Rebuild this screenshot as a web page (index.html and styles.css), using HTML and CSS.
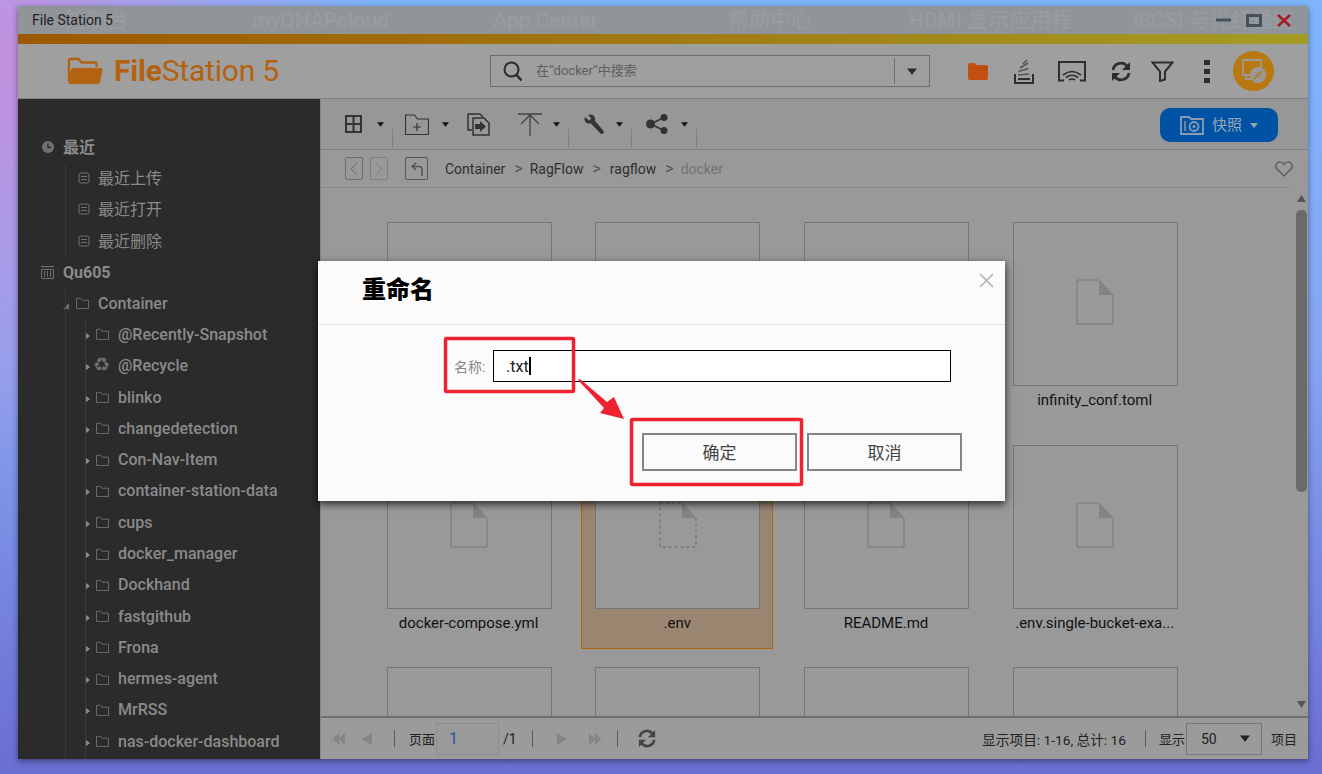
FILE: index.html
```html
<!DOCTYPE html>
<html lang="zh">
<head>
    <meta charset="UTF-8">
    <meta name="viewport" content="width=device-width, initial-scale=1.0">
    <title>File Station 5</title>
    <link rel="stylesheet" href="styles.css">
</head>
<body>

<svg class="defs" width="0" height="0">
    <symbol id="i-folder" viewBox="0 0 14 13"><path d="M.5 12.5V1.5h4.5l1.5 2h7v9z" fill="none" stroke="currentColor"/></symbol>
    <symbol id="i-list" viewBox="0 0 12 12"><rect x="1" y="1" width="10" height="10" rx="2" fill="none" stroke="currentColor"/><path d="M3 4.5h6M3 7.5h6" stroke="currentColor"/></symbol>
    <symbol id="i-caret" viewBox="0 0 8 5"><path d="M0 0h8L4 5z" fill="currentColor"/></symbol>
    <symbol id="i-file" viewBox="0 0 38 46"><path d="M1 1h22l14 15v29H1z" fill="none" stroke="#757b80"/><path d="M23 1l14 15H23z" fill="#80858a"/></symbol>
</svg>

<div class="window">
    <div class="titlebar">
        <div class="desktop-labels">
            <span class="label-console">控制台</span>
            <span class="label-cloud">myQNAPcloud</span>
            <span class="label-app">App Center</span>
            <span class="label-help">帮助中心</span>
            <span class="label-hdmi">HDMI 显示应用程</span>
            <span class="label-iscsi">iSCSI 与光纤通道</span>
        </div>
        <span class="title-text">File Station 5</span>
        <div class="win-controls">
            <svg width="15" height="12" viewBox="0 0 15 12"><path d="M0 6h15" stroke="#465058" stroke-width="3"/></svg>
            <svg width="16" height="13" viewBox="0 0 16 13"><rect x="1.500" y="1.500" width="13" height="10" fill="none" stroke="#465058" stroke-width="3"/></svg>
            <svg width="14" height="13" viewBox="0 0 14 13"><path d="M1 1l12 11M13 1L1 12" stroke="#a81c24" stroke-width="2.600"/></svg>
        </div>
    </div>
    <div class="strip"></div>

    <div class="header">
        <div class="logo">
            <svg width="36" height="28" viewBox="0 0 36 28"><path d="M2 24V3.500Q2 2 3.500 2h8l3 3.500h13q2 0 2 2V10" fill="none" stroke="#b3620f" stroke-width="2.400"/><path d="M6 11h28q2 0 1.600 2L33 25q-.4 2-2 2H3q-2 0-1.500-2L4 13q.4-2 2-2z" fill="#b3620f"/></svg>
            <span class="logo-text"><b>File</b>Station 5</span>
        </div>
        <div class="search">
            <svg width="20" height="21" viewBox="0 0 20 21"><circle cx="8.500" cy="8.500" r="7" fill="none" stroke="#2b2b2b" stroke-width="2"/><path d="M13.500 14l5 5.500" stroke="#2b2b2b" stroke-width="2.600"/></svg>
            <span class="search-hint">在“docker”中搜索</span>
            <span class="search-drop"><svg width="10" height="7"><use href="#i-caret"/></svg></span>
        </div>
        <div class="head-icons">
            <svg class="hi-folder" width="22" height="19" viewBox="0 0 22 19"><path d="M1 3q0-2 2-2h5l2 2h9q2 0 2 2v11q0 2-2 2H3q-2 0-2-2z" fill="#c4500f"/><path d="M3 6h18" stroke="#a8480f"/></svg>
            <svg class="hi-stack" width="20" height="25" viewBox="0 0 20 25"><path d="M1 15v9h18v-9M4 20h12" fill="none" stroke="#2e2e2e" stroke-width="2"/><path d="M4 16l11-1M4.500 12.500l10-3M6 9l8-5M9 5l4-4" stroke="#555" stroke-width="1.500"/></svg>
            <svg class="hi-cast" width="28" height="21" viewBox="0 0 28 21"><path d="M6 19.500H1V1h26v18.500h-5" fill="none" stroke="#2e2e2e" stroke-width="2"/><path d="M5 14q9-7 18 0M8 16.500q6-4.500 12 0M11 19q3-2 6 0" fill="none" stroke="#2e2e2e" stroke-width="1.700"/></svg>
            <svg class="hi-refresh" width="20" height="21" viewBox="0 0 20 21"><path d="M2 9a8 8 0 0 1 14-4M18 12a8 8 0 0 1-14 4" fill="none" stroke="#2e2e2e" stroke-width="2.800"/><path d="M19 1v8h-8zM1 20v-8h8z" fill="#2e2e2e"/></svg>
            <svg class="hi-filter" width="23" height="21" viewBox="0 0 23 21"><path d="M1.500 1.500h20l-7.500 9v8l-5 1.500v-9.500z" fill="none" stroke="#2e2e2e" stroke-width="2"/></svg>
            <svg class="hi-dots" width="6" height="23" viewBox="0 0 6 23"><path d="M0 0h6v5H0zM0 9h6v5H0zM0 18h6v5H0z" fill="#2e2e2e"/></svg>
            <span class="avatar">
                <svg width="26" height="26" viewBox="0 0 26 26"><path d="M9 17H2V2h18v8M5 17v4h5" fill="none" stroke="#9a9a9a" stroke-width="1.800"/><circle cx="17" cy="17" r="8" fill="#9a9a9a"/><path d="M13 21l8-8M15 15l1 1M18 18l1 1" stroke="#b87a10" stroke-width="1.500"/></svg>
            </span>
        </div>
    </div>

    <div class="workspace">
        <nav class="sidebar">
            <div class="tree-row root"><svg class="ico" width="12" height="12" viewBox="0 0 12 12"><circle cx="6" cy="6" r="6" fill="currentColor"/><path d="M6 2.500V6.500H9" fill="none" stroke="#2b2b2b" stroke-width="1.300"/></svg><span class="cjk">最近</span></div>
            <div class="tree-row leaf"><svg class="ico" width="12" height="12"><use href="#i-list"/></svg><span class="cjk">最近上传</span></div>
            <div class="tree-row leaf"><svg class="ico" width="12" height="12"><use href="#i-list"/></svg><span class="cjk">最近打开</span></div>
            <div class="tree-row leaf"><svg class="ico" width="12" height="12"><use href="#i-list"/></svg><span class="cjk">最近删除</span></div>
            <div class="tree-row root store"><svg class="ico" width="13" height="13" viewBox="0 0 13 13"><path d="M0 .5h13" stroke="currentColor" stroke-width="1.400"/><path d="M.5 3.500h12v9H.5zM3.500 5v6M6.500 5v6M9.500 5v6" fill="none" stroke="currentColor"/></svg><span>Qu605</span></div>
            <div class="tree-row share"><i class="tri open"></i><svg class="ico" width="13" height="12"><use href="#i-folder"/></svg><span>Container</span></div>
            <div class="tree-row sub"><i class="tri"></i><svg class="ico" width="13" height="12"><use href="#i-folder"/></svg><span>@Recently-Snapshot</span></div>
            <div class="tree-row sub"><i class="tri"></i><span class="glyph">♻</span><span>@Recycle</span></div>
            <div class="tree-row sub"><i class="tri"></i><svg class="ico" width="13" height="12"><use href="#i-folder"/></svg><span>blinko</span></div>
            <div class="tree-row sub"><i class="tri"></i><svg class="ico" width="13" height="12"><use href="#i-folder"/></svg><span>changedetection</span></div>
            <div class="tree-row sub"><i class="tri"></i><svg class="ico" width="13" height="12"><use href="#i-folder"/></svg><span>Con-Nav-Item</span></div>
            <div class="tree-row sub"><i class="tri"></i><svg class="ico" width="13" height="12"><use href="#i-folder"/></svg><span>container-station-data</span></div>
            <div class="tree-row sub"><i class="tri"></i><svg class="ico" width="13" height="12"><use href="#i-folder"/></svg><span>cups</span></div>
            <div class="tree-row sub"><i class="tri"></i><svg class="ico" width="13" height="12"><use href="#i-folder"/></svg><span>docker_manager</span></div>
            <div class="tree-row sub"><i class="tri"></i><svg class="ico" width="13" height="12"><use href="#i-folder"/></svg><span>Dockhand</span></div>
            <div class="tree-row sub"><i class="tri"></i><svg class="ico" width="13" height="12"><use href="#i-folder"/></svg><span>fastgithub</span></div>
            <div class="tree-row sub"><i class="tri"></i><svg class="ico" width="13" height="12"><use href="#i-folder"/></svg><span>Frona</span></div>
            <div class="tree-row sub"><i class="tri"></i><svg class="ico" width="13" height="12"><use href="#i-folder"/></svg><span>hermes-agent</span></div>
            <div class="tree-row sub"><i class="tri"></i><svg class="ico" width="13" height="12"><use href="#i-folder"/></svg><span>MrRSS</span></div>
            <div class="tree-row sub"><i class="tri"></i><svg class="ico" width="13" height="12"><use href="#i-folder"/></svg><span>nas-docker-dashboard</span></div>
        </nav>

        <main class="main">
            <div class="toolbar">
                <div class="tool t-view">
                    <svg width="17" height="18" viewBox="0 0 17 18"><path d="M1 1h15v16H1zM8.500 1v16M1 9h15" fill="none" stroke="#333" stroke-width="2"/></svg>
                    <svg width="7" height="5"><use href="#i-caret"/></svg>
                </div>
                <i class="tool-sep"></i>
                <div class="tool t-new">
                    <svg width="24" height="21" viewBox="0 0 24 21"><path d="M.5 20.500V1h9l3 4h11v15.500zM12 9v8M8 13h8" fill="none" stroke="#333" stroke-width="1.200"/></svg>
                    <svg width="7" height="5"><use href="#i-caret"/></svg>
                </div>
                <div class="tool t-copy">
                    <svg width="23" height="23" viewBox="0 0 23 23"><path d="M5 17H1V1h12l3 3" fill="none" stroke="#333" stroke-width="1.500"/><path d="M6 5h11l5 5v12H6z" fill="none" stroke="#333" stroke-width="1.500"/><path d="M8 11h5V8l6 5.500-6 5.500v-3H8z" fill="#333"/></svg>
                </div>
                <div class="tool t-up">
                    <svg width="24" height="23" viewBox="0 0 24 23"><path d="M0 1h24M12 23V3M3 11l9-9 9 9" fill="none" stroke="#444" stroke-width="1.300"/></svg>
                    <svg width="7" height="5"><use href="#i-caret"/></svg>
                </div>
                <i class="tool-sep"></i>
                <div class="tool t-wrench">
                    <svg width="20" height="21" viewBox="0 0 20 21"><path d="M1 3l4 3.500 2.500-2L4 1q4-1.500 6 1 1.500 2 .8 4.500L19.500 17q.7 1.500-.5 2.500T16.500 19.500L7 9.500Q3 10 1.500 8T1 3z" fill="#333"/></svg>
                    <svg width="7" height="5"><use href="#i-caret"/></svg>
                </div>
                <i class="tool-sep"></i>
                <div class="tool t-share">
                    <svg width="22" height="20" viewBox="0 0 22 20"><circle cx="4.500" cy="10" r="4.500" fill="#333"/><circle cx="18" cy="3.500" r="3.500" fill="#333"/><circle cx="18" cy="16.500" r="3.500" fill="#333"/><path d="M4.500 10L18 3.500M4.500 10L18 16.500" stroke="#333" stroke-width="1.600"/></svg>
                    <svg width="7" height="5"><use href="#i-caret"/></svg>
                </div>
                <i class="tool-sep"></i>
                <button class="snapshot">
                    <svg width="24" height="20" viewBox="0 0 24 20"><path d="M1 19V2h8l2 2h12v15z" fill="none" stroke="#8a9ab0" stroke-width="1.800"/><path d="M5 6v10" stroke="#8a9ab0" stroke-width="1.500"/><circle cx="14" cy="11.500" r="4.500" fill="none" stroke="#8a9ab0" stroke-width="1.800"/><circle cx="14" cy="11.500" r="1.500" fill="#8a9ab0"/></svg>
                    <span>快照</span>
                    <svg width="8" height="5"><use href="#i-caret"/></svg>
                </button>
            </div>

            <div class="crumbs">
                <span class="nav-btn"><svg width="8" height="14" viewBox="0 0 8 14"><path d="M7 1L1 7l6 6" fill="none" stroke="#6a6a6a"/></svg></span>
                <span class="nav-btn off"><svg width="8" height="14" viewBox="0 0 8 14"><path d="M1 1l6 6-6 6" fill="none" stroke="#808080"/></svg></span>
                <span class="nav-btn up"><svg width="12" height="14" viewBox="0 0 12 14"><path d="M5 1L1 4.500 5 8M1 4.500h7q3 0 3 3V14" fill="none" stroke="#505050" stroke-width="1.400"/></svg></span>
                <span class="crumb first">Container</span><i class="arrow">&gt;</i>
                <span class="crumb">RagFlow</span><i class="arrow">&gt;</i>
                <span class="crumb third">ragflow</span><i class="arrow">&gt;</i>
                <span class="crumb last">docker</span>
                <svg class="heart" width="18" height="16" viewBox="0 0 18 16"><path d="M9 15L2 8Q0 6 1 3.500 2.500.5 5.500 1 8 1.500 9 3.500 10 1.500 12.500 1 15.500.5 17 3.500 18 6 16 8z" fill="none" stroke="#555" stroke-width="1.200"/></svg>
            </div>

            <div class="browse">
                <div class="files">
                    <div class="file"><div class="thumb"></div></div>
                    <div class="file"><div class="thumb"></div></div>
                    <div class="file"><div class="thumb"></div></div>
                    <div class="file"><div class="thumb"><svg width="38" height="46"><use href="#i-file"/></svg></div><p>infinity_conf.toml</p></div>
                    <div class="file"><div class="thumb"><svg width="38" height="46"><use href="#i-file"/></svg></div><p>docker-compose.yml</p></div>
                    <div class="file selected"><div class="thumb"><svg width="38" height="46" viewBox="0 0 38 46"><path d="M1 1h22l14 15v29H1z" fill="none" stroke="#666" stroke-dasharray="3 3"/><path d="M23 1l14 15H23z" fill="#80858a"/></svg></div><p>.env</p></div>
                    <div class="file"><div class="thumb"><svg width="38" height="46"><use href="#i-file"/></svg></div><p>README.md</p></div>
                    <div class="file"><div class="thumb"><svg width="38" height="46"><use href="#i-file"/></svg></div><p>.env.single-bucket-exa...</p></div>
                    <div class="file"><div class="thumb"></div></div>
                    <div class="file"><div class="thumb"></div></div>
                    <div class="file"><div class="thumb"></div></div>
                    <div class="file"><div class="thumb"></div></div>
                </div>
                <div class="scrollbar">
                    <svg width="9" height="7"><path d="M4.500 0L9 7H0z" fill="#555"/></svg>
                    <div class="thumb-bar"></div>
                    <svg class="scroll-down" width="9" height="7"><path d="M0 0h9L4.500 7z" fill="#555"/></svg>
                </div>
            </div>

            <div class="pager">
                <svg class="pg-first" width="14" height="12" viewBox="0 0 14 12"><path d="M1 0v12M8 0v12L2 6zM14 0v12L8 6z" fill="#858585" stroke="#858585" stroke-width=".5"/></svg>
                <svg class="pg-prev" width="12" height="12" viewBox="0 0 12 12"><path d="M12 0v12L2 6z" fill="#858585"/></svg>
                <i class="pg-sep first-sep"></i>
                <span class="pg-label">页面</span>
                <span class="pg-input">1</span>
                <span class="pg-total">/1</span>
                <i class="pg-sep total-sep"></i>
                <svg class="pg-next" width="12" height="12" viewBox="0 0 12 12"><path d="M0 0v12L10 6z" fill="#858585"/></svg>
                <svg class="pg-last" width="14" height="12" viewBox="0 0 14 12"><path d="M13 0v12M6 0v12L12 6zM0 0v12L6 6z" fill="#858585" stroke="#858585" stroke-width=".5"/></svg>
                <i class="pg-sep last-sep"></i>
                <svg class="pg-refresh" width="18" height="21" viewBox="0 0 20 21"><path d="M2 9a8 8 0 0 1 14-4M18 12a8 8 0 0 1-14 4" fill="none" stroke="#444" stroke-width="3"/><path d="M19 1v8h-8zM1 20v-8h8z" fill="#444"/></svg>
                <span class="pg-info">显示项目: 1-16, 总计: 16</span>
                <i class="pg-sep info-sep"></i>
                <span class="pg-label">显示</span>
                <span class="pg-select">50<svg width="10" height="7"><use href="#i-caret"/></svg></span>
                <span class="pg-unit">项目</span>
            </div>
        </main>
    </div>
</div>

<div class="dialog">
    <div class="dialog-head">
        <h2>重命名</h2>
        <svg class="dialog-close" width="15" height="15" viewBox="0 0 15 15"><path d="M1 1l13 13M14 1L1 14" stroke="#b0b0b0" stroke-width="1.500"/></svg>
    </div>
    <div class="dialog-row">
        <label>名称:</label>
        <div class="name-input">.txt<i class="caret"></i></div>
    </div>
    <div class="dialog-actions">
        <button>确定</button>
        <button>取消</button>
    </div>
</div>

<!-- red annotation drawn on top of the screenshot -->
<svg class="marks" width="1322" height="774" viewBox="0 0 1322 774">
    <rect x="445.500" y="338.500" width="128" height="53" rx="1" fill="none" stroke="#ee2230" stroke-width="3.500"/>
    <rect x="631.500" y="419.500" width="170" height="65" rx="1" fill="none" stroke="#ee2230" stroke-width="3.500"/>
    <path d="M578 380L580 379 607 402 614 397 624 419 600 413 604 408z" fill="#ee2230"/>
</svg>

</body>
</html>
```

FILE: styles.css
```css
* {
    box-sizing: border-box;
}
body {
    margin: 0;
    height: 774px;
    overflow: hidden;
    padding: 6px 0 0 18px;
    font-family: Roboto, "Noto Sans CJK SC", sans-serif;
    background:
        radial-gradient(circle at -40px 60px, rgba(205, 140, 220, 0.95), rgba(205, 140, 220, 0) 420px),
        linear-gradient(180deg, #7fb5fb 0%, #86a6f2 45%, #6a6dd2 100%);
}
.defs {
    position: absolute;
}

.window {
    width: 1290px;
    height: 753px;
    display: flex;
    flex-direction: column;
    box-shadow: 0 2px 6px rgba(0, 0, 0, 0.45);
}

.titlebar {
    position: relative;
    height: 28px;
    display: flex;
    align-items: center;
    padding: 0 17px 0 14px;
    background-color: #90959a;
    flex: none;
}
.desktop-labels span {
    position: absolute;
    top: 0;
    font-size: 21px;
    line-height: 28px;
    font-weight: 500;
    color: #979ca1;
    white-space: nowrap;
}
.label-console { left: 47px; }
.label-cloud { left: 234px; }
.label-app { left: 475px; }
.label-help { left: 710px; }
.label-hdmi { left: 891px; }
.label-iscsi { left: 1115px; }
.title-text {
    position: relative;
    font-size: 14px;
    color: #222;
}
.win-controls {
    position: relative;
    margin-left: auto;
    display: flex;
    align-items: center;
    gap: 15px;
}

.strip {
    height: 10px;
    flex: none;
    background: linear-gradient(90deg, #9e5800, #a49c25);
}

.header {
    height: 55px;
    flex: none;
    display: flex;
    align-items: center;
    background-color: #9f9f9f;
    border-bottom: 1px solid #828282;
}
.logo {
    width: 472px;
    padding-left: 49px;
    display: flex;
    align-items: center;
    gap: 11px;
    color: #b3620f;
}
.logo-text {
    margin-top: -2px;
    font-size: 30px;
    letter-spacing: -0.2px;
    white-space: nowrap;
}
.search {
    width: 440px;
    height: 32px;
    display: flex;
    align-items: center;
    padding-left: 12px;
    border: 1px solid #6e6e6e;
}
.search-hint {
    margin: -3px 0 0 13px;
    font-size: 13px;
    color: #5e5e5e;
}
.search-drop {
    margin-left: auto;
    width: 35px;
    height: 26px;
    display: flex;
    align-items: center;
    justify-content: center;
    color: #2b2b2b;
    border-left: 1px solid #6e6e6e;
}
.head-icons {
    display: flex;
    align-items: center;
    margin-left: 37px;
}
.hi-stack { margin-left: 25px; }
.hi-cast { margin-left: 24px; }
.hi-refresh { margin-left: 25px; }
.hi-filter { margin-left: 20px; }
.hi-dots { margin-left: 30px; }
.avatar {
    margin-left: 23px;
    width: 41px;
    height: 40px;
    display: flex;
    align-items: center;
    justify-content: center;
    border-radius: 50%;
    background-color: #b87a10;
}

.workspace {
    flex: 1;
    display: flex;
    min-height: 0;
}

.sidebar {
    position: relative;
    width: 302px;
    flex: none;
    padding-top: 32px;
    overflow: hidden;
    background-color: #2b2b2b;
    color: #8a8a8a;
}
.sidebar::before,
.sidebar::after {
    content: "";
    position: absolute;
    width: 1px;
}
.sidebar::before {
    left: 47px;
    top: 66px;
    bottom: 0;
    background: linear-gradient(180deg, #3a3a3a 93px, transparent 93px, transparent 125px, #3a3a3a 125px);
}
.sidebar::after {
    left: 67px;
    top: 220px;
    bottom: 0;
    background-color: #3a3a3a;
}
.tree-row {
    height: 31.3px;
    display: flex;
    align-items: center;
    font-size: 16px;
    font-weight: 500;
    white-space: nowrap;
}
.tree-row .ico {
    flex: none;
    color: #707070;
}
.tree-row .cjk {
    margin-top: -2px;
    font-weight: 400;
}
.root {
    padding-left: 24px;
    font-weight: 700;
}
.root span {
    margin-left: 9px;
}
.tree-row.root .cjk {
    font-weight: 700;
}
.store {
    padding-left: 23px;
    padding-top: 2px;
}
.leaf {
    padding-left: 60px;
}
.leaf span {
    margin-left: 8px;
}
.share {
    padding-left: 45px;
}
.share span {
    margin-left: 9px;
}
.share .ico {
    margin-left: 7px;
}
.sub {
    padding-left: 67px;
}
.sub span:last-child {
    margin-left: 9px;
}
.sub .ico {
    margin-left: 6px;
}
.tri {
    width: 0;
    height: 0;
    flex: none;
    margin-top: 3px;
    border-top: 4px solid transparent;
    border-bottom: 4px solid transparent;
    border-left: 5px solid #8a8a8a;
}
.tri.open {
    margin-top: 6px;
    border-top: 0;
    border-left: 6px solid transparent;
    border-bottom: 6px solid #707070;
}
.glyph {
    width: 16px;
    margin: -3px 0 0 3px;
    font-family: "DejaVu Sans", sans-serif;
    font-size: 19px;
    line-height: 1;
    color: #707070;
}

.main {
    flex: 1;
    min-width: 0;
    display: flex;
    flex-direction: column;
    background-color: #999;
    border-left: 1px solid #858585;
}

.toolbar {
    height: 51px;
    flex: none;
    display: flex;
    align-items: flex-start;
    padding: 13px 30px 0 24px;
    background-color: #979797;
    border-bottom: 1px solid #7f7f7f;
}
.tool {
    height: 24px;
    display: flex;
    align-items: center;
    justify-content: space-between;
    color: #111;
}
.t-view { width: 39px; }
.t-new { width: 44px; margin-left: 12px; }
.t-copy { width: 23px; margin-left: 18px; }
.t-up { width: 42px; margin-left: 28px; }
.t-wrench { width: 39px; margin-left: 15px; }
.t-share { width: 42px; margin-left: 14px; }
.tool-sep {
    width: 1px;
    height: 18px;
    margin: 17px 0 0 8px;
    background-color: #7f7f7f;
}
.snapshot {
    margin: -4px 0 0 auto;
    width: 118px;
    height: 34px;
    display: flex;
    align-items: center;
    justify-content: center;
    gap: 8px;
    border: none;
    border-radius: 10px;
    background-color: #0052a5;
    color: #9aa6b4;
    font-family: inherit;
    font-size: 15px;
}
.snapshot span {
    margin-top: -3px;
}

.crumbs {
    height: 38px;
    flex: none;
    display: flex;
    align-items: center;
    margin-right: 18px;
    padding-left: 24px;
    border-bottom: 1px solid #888;
    font-size: 14px;
    color: #2e2e2e;
}
.nav-btn {
    width: 18px;
    height: 23px;
    margin-right: 7px;
    display: flex;
    align-items: center;
    justify-content: center;
    border: 1px solid #6e6e6e;
    border-radius: 2px;
}
.nav-btn.off {
    border-color: #808080;
}
.nav-btn.up {
    width: 23px;
    margin: 0 0 0 10px;
    border-color: #555;
}
.crumb.first {
    margin-left: 17px;
}
.crumb.last {
    color: #727272;
}
.arrow {
    margin: 0 9px;
    font-style: normal;
    font-size: 16px;
    color: #555;
}
.first + .arrow,
.third + .arrow {
    margin-right: 7px;
}
.heart {
    margin-left: auto;
    margin-right: -3px;
}

.browse {
    flex: 1;
    min-height: 0;
    display: flex;
}
.files {
    flex: 1;
    min-width: 0;
    overflow: hidden;
    display: grid;
    grid-template-columns: repeat(4, 192px);
    grid-auto-rows: 219px;
    column-gap: 16.7px;
    row-gap: 3.5px;
    padding: 19px 0 0 51.6px;
}
.file {
    padding: 14px 13px 0;
    border: 1px solid transparent;
    text-align: center;
}
.file p {
    margin: 4px -12px 0;
    font-size: 15px;
    line-height: 20px;
    color: #111;
    white-space: nowrap;
}
.thumb {
    width: 165px;
    height: 164px;
    display: flex;
    justify-content: center;
    padding-top: 56px;
    border: 1px solid #757575;
}
.file.selected {
    background-color: #9a8570;
    border-color: #b3640c;
}
.file.selected .thumb {
    background-color: #999;
}
.scrollbar {
    width: 13px;
    flex: none;
    display: flex;
    flex-direction: column;
    align-items: center;
    padding-top: 7px;
}
.thumb-bar {
    width: 11px;
    height: 282px;
    margin-top: 8px;
    border-radius: 5px;
    background-color: #6a6a6a;
}
.scroll-down {
    margin-top: auto;
    margin-bottom: 8px;
}

.pager {
    height: 43px;
    flex: none;
    display: flex;
    align-items: center;
    padding: 0 11px 0 10px;
    font-size: 13px;
    color: #222;
    background-color: #9b9b9b;
    border-top: 2px solid #707070;
}
.pg-prev { margin-left: 15px; }
.pg-sep {
    width: 1px;
    height: 17px;
    background-color: #5c5c5c;
}
.first-sep { margin: 0 14px 0 22px; }
.pg-label {
    white-space: nowrap;
}
.pg-input {
    width: 63px;
    height: 32px;
    margin-left: 1px;
    line-height: 30px;
    padding-left: 12px;
    font-size: 16px;
    color: #1f5c99;
    border: 1px solid #8e8e8e;
}
.pg-total { margin-left: 4px; font-size: 14px; }
.total-sep { margin: 0 24px 0 15px; }
.pg-last { margin-left: 20px; }
.last-sep { margin: 0 20px 0 14px; }
.pg-info {
    margin-left: auto;
    font-size: 13.7px;
    white-space: nowrap;
}
.info-sep { margin: 0 13px 0 19px; }
.pg-select {
    width: 76px;
    height: 32px;
    margin-left: 1px;
    display: flex;
    align-items: center;
    justify-content: space-between;
    padding: 0 11px 0 14px;
    font-size: 14px;
    border: 1px solid #777;
}
.pg-unit { margin-left: 9px; white-space: nowrap; }

.dialog {
    position: absolute;
    left: 318px;
    top: 261px;
    width: 687px;
    height: 240px;
    background-color: #fbfbfb;
    box-shadow: 0 3px 8px rgba(0, 0, 0, 0.75);
}
.dialog-head {
    position: relative;
    height: 64px;
    padding: 12px 0 0 44px;
    border-bottom: 1px solid #e2e2e2;
}
.dialog-head h2 {
    margin: 0;
    font-size: 24px;
    font-weight: 900;
    line-height: 34px;
    color: #000;
}
.dialog-close {
    position: absolute;
    right: 11px;
    top: 12px;
}
.dialog-row {
    display: flex;
    align-items: center;
    margin: 25px 0 0 136px;
}
.dialog-row label {
    width: 39px;
    font-size: 14px;
    color: #888;
}
.name-input {
    width: 458px;
    height: 32px;
    display: flex;
    align-items: center;
    padding-left: 12px;
    font-size: 16px;
    color: #222;
    background-color: #fff;
    border: 1px solid #000;
}
.caret {
    width: 2px;
    height: 18px;
    background-color: #000;
}
.dialog-actions {
    display: flex;
    justify-content: flex-end;
    gap: 10px;
    margin: 51px 43px 0 0;
}
.dialog-actions button {
    width: 155px;
    height: 38px;
    padding-bottom: 3px;
    font-family: inherit;
    font-size: 17px;
    color: #444;
    background-color: #fbfbfb;
    border: 2px solid #858585;
}

.marks {
    position: absolute;
    left: 0;
    top: 0;
    pointer-events: none;
}
```
